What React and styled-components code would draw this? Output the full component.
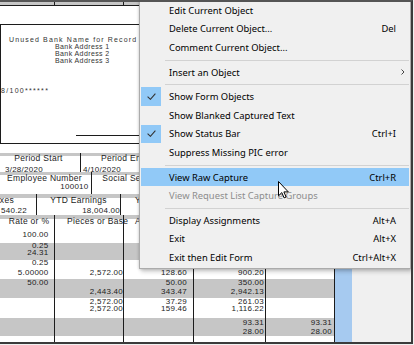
import styled, { createGlobalStyle } from "styled-components";

const GlobalStyle = createGlobalStyle`
  html, body { margin: 0; padding: 0; }
  body { background: #f0f0f0; width: 414px; height: 345px; overflow: hidden; }
`;

const INK = "#1c1c1c";
const SHADE = "#c6c6c6";

// x widths of the stub columns, shared by the top band and the earnings table
const COLS = [55, 69, 70, 72, 69];
const PADS = [5.5, 0, 6, 1, 2];

const rows = [
  { h: 16, band: false, v: ["100.00"] },
  { h: 6, band: true, v: ["0.25"] },
  { h: 7.4, band: true, v: ["24.31"] },
  { h: 3.6, band: true, v: [] },
  { h: 6, band: false, v: ["0.25"] },
  { h: 13, band: false, v: ["5.00000", "2,572.00", "128.60", "900.20"] },
  { h: 7, band: true, v: ["50.00", "", "50.00", "350.00"] },
  { h: 12, band: true, v: ["", "2,443.40", "343.47", "2,942.13"] },
  { h: 8, band: false, v: ["", "2,572.00", "37.29", "261.03"] },
  { h: 6, band: false, v: ["", "2,572.00", "159.46", "1,116.22"] },
  { h: 6, band: false, v: [] },
  { h: 9, band: true, v: ["", "", "", "93.31", "93.31"] },
  { h: 9, band: true, v: ["", "", "", "28.00", "28.00"] },
  { h: 6, band: false, v: [] },
];

const menu = [
  { label: "Edit Current Object" },
  { label: "Delete Current Object...", keys: "Del" },
  { label: "Comment Current Object..." },
  "sep",
  { label: "Insert an Object", sub: true },
  "sep",
  { label: "Show Form Objects", checked: true },
  { label: "Show Blanked Captured Text" },
  { label: "Show Status Bar", checked: true, keys: "Ctrl+I" },
  { label: "Suppress Missing PIC error" },
  "sep",
  { label: "View Raw Capture", keys: "Ctrl+R", hot: true },
  { label: "View Request List Capture Groups", disabled: true },
  "sep",
  { label: "Display Assignments", keys: "Alt+A" },
  { label: "Exit", keys: "Alt+X" },
  { label: "Exit then Edit Form", keys: "Ctrl+Alt+X" },
];

function Tick() {
  return (
    <svg width="9" height="7" viewBox="0 0 9 7">
      <path d="M0.6 3.6 L3.4 6.3 L8.4 0.7" fill="none" stroke="#333" strokeWidth="1.1" />
    </svg>
  );
}

function Chevron() {
  return (
    <svg width="4" height="6" viewBox="0 0 4 6">
      <path d="M0.5 0.5 L3 3 L0.5 5.5" fill="none" stroke="#333" strokeWidth="0.9" />
    </svg>
  );
}

export default function App() {
  return (
    <>
      <GlobalStyle />
      <Window>
        <Doc>
          <TopBand>
            {COLS.map((w, i) => <Cell key={i} $w={w} $pad={0} />)}
          </TopBand>
          <Gap $h={18} />
          <Check>
            <BankName>Unused Bank Name for Record</BankName>
            <BankAddr>Bank Address 1</BankAddr>
            <BankAddr>Bank Address 2</BankAddr>
            <BankAddr>Bank Address 3</BankAddr>
            <Words>8/100******</Words>
            <SignLine />
          </Check>
          <Gap $h={8.5} />

          <Block $h={19.5} $strip={3.5}>
            <Field $w={81}>
              <FieldHead $h={10.5} $lh={11} $pr={3}>Period Start</FieldHead>
              <FieldValue $h={9} $lh={13} $align="left" $pl={5} $clip>3/28/2020</FieldValue>
            </Field>
            <Field $w={86}>
              <FieldHead $h={10.5} $lh={11}>Period End</FieldHead>
              <FieldValue $h={9} $lh={13} $align="left" $pl={2} $clip>4/10/2020</FieldValue>
            </Field>
          </Block>

          <Block $h={22} $strip={2.6}>
            <Field $w={92}>
              <FieldHead $h={12} $lh={12} $pr={2}>Employee Number</FieldHead>
              <FieldValue $h={10} $lh={6} $pr={2.5}>100010</FieldValue>
            </Field>
            <Field $w={117}>
              <FieldHead $h={12} $lh={12}>Social Security Number</FieldHead>
              <FieldValue $h={10} $lh={6} />
            </Field>
          </Block>

          <Block $h={21} $strip={3.6}>
            <Field $w={37}>
              <FieldHead $h={11} $lh={12} $justify="flex-end" $pr={22}>Taxes</FieldHead>
              <FieldValue $h={10} $lh={11} $pr={9}>540.22</FieldValue>
            </Field>
            <Field $w={84}>
              <FieldHead $h={11} $lh={12}>YTD Earnings</FieldHead>
              <FieldValue $h={10} $lh={11} $pr={0}>18,004.00</FieldValue>
            </Field>
            <Field $w={100}>
              <FieldHead $h={11} $lh={12} $justify="flex-start" $pl={14}>YTD Deductions</FieldHead>
              <FieldValue $h={10} $lh={11} />
            </Field>
          </Block>

          <HeadRow>
            <HeadCell $w={COLS[0]} $pl={4}>Rate or %</HeadCell>
            <HeadCell $w={COLS[1]} $align="left" $pl={12}>Pieces or Base</HeadCell>
            <HeadCell $w={COLS[2]} $align="left" $pl={11}>Amount</HeadCell>
            <HeadCell $w={COLS[3]} />
            <HeadCell $w={COLS[4]} />
          </HeadRow>
          {rows.map((r, i) => (
            <ColRow key={i} $h={r.h} $band={r.band}>
              {COLS.map((w, c) => (
                <Cell key={c} $w={w} $pad={PADS[c]}>{r.v[c] || ""}</Cell>
              ))}
            </ColRow>
          ))}
        </Doc>
        <SelBar />
        <Side />

        <Menu>
          {menu.map((m, i) =>
            m === "sep" ? (
              <Separator key={i} />
            ) : (
              <Item key={i} $hot={m.hot} $disabled={m.disabled}>
                <CheckCell $on={m.checked}>{m.checked && <Tick />}</CheckCell>
                <Label>{m.label}</Label>
                <Keys>{m.keys || ""}</Keys>
                <SubArrow>{m.sub && <Chevron />}</SubArrow>
              </Item>
            )
          )}
        </Menu>

        <Pointer viewBox="0 0 11 18" width="11" height="18">
          <path
            d="M0.5 0.5 V14.8 L3.8 11.6 L6.1 16.9 L8.1 16 L5.9 10.9 H10.3 Z"
            fill="#fff"
            stroke="#000"
            strokeWidth="1"
          />
        </Pointer>
      </Window>
    </>
  );
}

const Window = styled.div`
  position: relative;
  display: flex;
  width: 413px;
  height: 344px;
  box-sizing: border-box;
  border-top: 2px solid #555;
  border-right: 2px solid #3b3b3b;
  border-bottom: 2px solid #3b3b3b;
  overflow: hidden;
  background: #f0f0f0;
`;

const Doc = styled.div`
  width: 335px;
  flex-shrink: 0;
  display: flex;
  flex-direction: column;
  background: #fff;
  overflow: hidden;
  color: ${INK};
  font-family: "Liberation Sans", Arial, sans-serif;
`;

const SelBar = styled.div`
  width: 17px;
  flex-shrink: 0;
  background: #a6caf0;
`;

const Side = styled.div`
  flex: 1;
  background: #f0f0f0;
`;

const Gap = styled.div`
  flex-shrink: 0;
  height: ${(p) => p.$h}px;
`;

const ColRow = styled.div`
  display: flex;
  flex-shrink: 0;
  height: ${(p) => p.$h}px;
  line-height: ${(p) => p.$h}px;
  background: ${(p) => (p.$band ? SHADE : "#fff")};
`;

const TopBand = styled(ColRow).attrs({ $h: 3, $band: true })`
  border-bottom: 1px solid ${INK};
`;

const Cell = styled.div`
  width: ${(p) => p.$w}px;
  flex-shrink: 0;
  box-sizing: border-box;
  border-right: 1px solid ${INK};
  padding-right: ${(p) => p.$pad}px;
  text-align: right;
  white-space: nowrap;
  font-size: 8px;
  letter-spacing: 0.25px;
`;

const Check = styled.div`
  flex-shrink: 0;
  height: 120px;
  box-sizing: border-box;
  padding-top: 10.5px;
  border-top: 1px solid ${INK};
  border-left: 1px solid ${INK};
  border-bottom: 1px solid ${INK};
  color: #333;
`;

const BankName = styled.div`
  margin-left: 8px;
  font-size: 7px;
  line-height: 7px;
  letter-spacing: 1.15px;
  white-space: nowrap;
`;

const BankAddr = styled.div`
  margin-left: 54px;
  font-size: 7px;
  line-height: 7px;
  letter-spacing: 0.4px;
  white-space: nowrap;
`;

const Words = styled.div`
  margin-top: 23px;
  font-size: 7px;
  line-height: 7px;
  letter-spacing: 1.3px;
  white-space: nowrap;
`;

const SignLine = styled.div`
  margin: 41.5px 0 0 75px;
  width: 220px;
  border-top: 1px solid ${INK};
`;

const Block = styled.div`
  display: flex;
  flex-shrink: 0;
  height: ${(p) => p.$h}px;
  background: linear-gradient(${SHADE} 0 ${(p) => p.$strip}px, #fff ${(p) => p.$strip}px);
`;

const Field = styled.div`
  width: ${(p) => p.$w}px;
  flex-shrink: 0;
  box-sizing: border-box;
  border-right: 1px solid ${INK};
  display: flex;
  flex-direction: column;
`;

const FieldHead = styled.div`
  display: flex;
  justify-content: ${(p) => p.$justify || "center"};
  height: ${(p) => p.$h}px;
  line-height: ${(p) => p.$lh}px;
  padding: 0 ${(p) => p.$pr || 0}px 0 ${(p) => p.$pl || 0}px;
  font-size: 8.5px;
  letter-spacing: 0.3px;
  white-space: nowrap;
`;

const FieldValue = styled.div`
  height: ${(p) => p.$h}px;
  line-height: ${(p) => p.$lh}px;
  padding: 0 ${(p) => p.$pr || 0}px 0 ${(p) => p.$pl || 0}px;
  text-align: ${(p) => p.$align || "right"};
  font-size: 8px;
  letter-spacing: 0.25px;
  white-space: nowrap;
  overflow: ${(p) => (p.$clip ? "hidden" : "visible")};
`;

const HeadRow = styled.div`
  display: flex;
  flex-shrink: 0;
  height: 12px;
  line-height: 12px;
  background: linear-gradient(${SHADE} 0 3.5px, #fff 3.5px);
`;

const HeadCell = styled.div`
  width: ${(p) => p.$w}px;
  flex-shrink: 0;
  box-sizing: border-box;
  border-right: 1px solid ${INK};
  padding-left: ${(p) => p.$pl || 0}px;
  text-align: ${(p) => p.$align || "center"};
  font-size: 8.5px;
  letter-spacing: 0.3px;
  white-space: nowrap;
`;

const Menu = styled.div`
  position: absolute;
  left: 139px;
  top: -3px;
  width: 272px;
  box-sizing: border-box;
  padding: 1px;
  background: #f0f0f0;
  border: 1px solid #ababab;
  box-shadow: 0 0 3px rgba(0, 0, 0, 0.22), 2px 3px 4px rgba(0, 0, 0, 0.18);
  font-family: "Noto Sans", "Open Sans", sans-serif;
  font-size: 9.4px;
`;

const Item = styled.div`
  display: grid;
  grid-template-columns: 20px 1fr auto 13px;
  align-items: center;
  height: 18.6px;
  white-space: nowrap;
  background: ${(p) => (p.$hot ? "#91c9f7" : "transparent")};
  color: ${(p) => (p.$disabled ? "#8d8d8d" : "#000")};
`;

const CheckCell = styled.span`
  align-self: stretch;
  display: flex;
  align-items: center;
  justify-content: center;
  background: ${(p) => (p.$on ? "#91c9f7" : "transparent")};
`;

const Label = styled.span`
  padding-left: 8px;
`;

const Keys = styled.span``;

const SubArrow = styled.span`
  display: flex;
  align-items: center;
  justify-content: center;
`;

const Separator = styled.div`
  height: 3px;
  margin: 0 0 2px 24px;
  border-bottom: 1px solid #d2d2d2;
`;

const Pointer = styled.svg`
  position: absolute;
  left: 277.5px;
  top: 179px;
  display: block;
`;
